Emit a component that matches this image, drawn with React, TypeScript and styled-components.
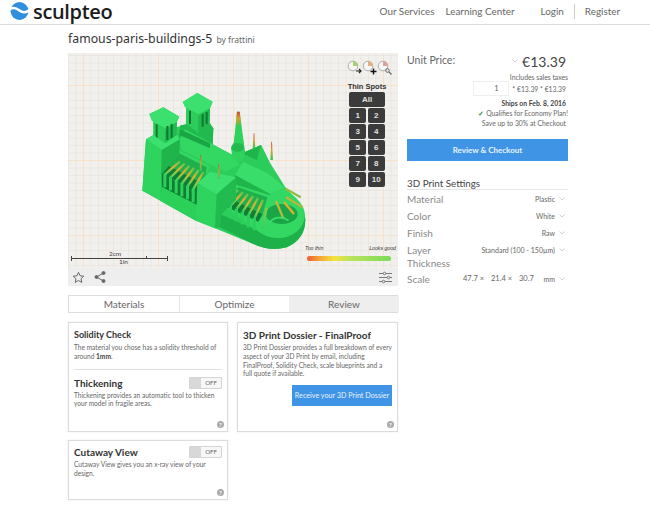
import React from "react";
import styled, { createGlobalStyle } from "styled-components";

const Global = createGlobalStyle`
  html, body { margin: 0; padding: 0; background: #fff; }
  body { font-family: Lato, "Noto Sans", sans-serif; color: #555; width: 650px; height: 508px; overflow: hidden; }
  * { box-sizing: border-box; }
`;

const Header = styled.header`
  height: 25px;
  border-bottom: 1px solid #dcdcdc;
  display: flex;
  align-items: center;
  padding: 0 30px 2px 10px;
`;
const Brand = styled.div`
  display: flex;
  align-items: center;
  gap: 4px;
  font-family: "Open Sans", sans-serif;
  font-weight: 600;
  font-size: 20px;
  letter-spacing: -0.35px;
  color: #1c1c1c;
  line-height: 23px;
`;
const Nav = styled.nav`
  margin-left: auto;
  display: flex;
  align-items: center;
  font-size: 9.9px;
  color: #666;
`;
const NavLink = styled.span<{ $ml: number }>`
  margin-left: ${(p) => p.$ml}px;
`;
const NavDivider = styled.span`
  width: 1px;
  height: 15px;
  background: #ccc;
  margin: 0 10px;
`;
const Main = styled.main`
  padding: 6px 0 0 68px;
  width: 510px;
`;
const Title = styled.h1`
  margin: 0 0 6px;
  height: 16px;
  font-family: "Noto Sans", sans-serif;
  font-weight: 400;
  font-size: 12.3px;
  line-height: 16px;
  color: #333;
`;
const By = styled.small`
  font-size: 8.5px;
  line-height: 1;
  color: #666;
  margin-left: 4px;
`;
const Columns = styled.div`
  display: grid;
  grid-template-columns: 330px 161px;
  column-gap: 9px;
`;
const Left = styled.div`
  display: flex;
  flex-direction: column;
`;
const Canvas = styled.div`
  position: relative;
  height: 215px;
  background-color: #f2f0ed;
  background-image:
    linear-gradient(90deg, #f7e1ca 1px, transparent 1px),
    linear-gradient(0deg, #f7e1ca 1px, transparent 1px),
    linear-gradient(90deg, #eae7e2 1px, transparent 1px),
    linear-gradient(0deg, #eae7e2 1px, transparent 1px);
  background-size: 75px 75px, 75px 75px, 7.5px 7.5px, 7.5px 7.5px;
  background-position: 15px 0, 0 33px, 0 0, 0 3px;
`;
const ViewBar = styled.div`
  height: 18px;
  background: #eeeeee;
  display: flex;
  align-items: center;
  padding: 0 6px 0 4px;
  gap: 9px;
`;
const BarEnd = styled.span`
  margin-left: auto;
  display: flex;
`;
const ModelSvg = styled.svg`
  position: absolute;
  left: 42px;
  top: 37px;
  width: 220px;
  height: 160px;
`;
const Tools = styled.div`
  position: absolute;
  left: 279px;
  top: 7px;
  display: flex;
  gap: 0;
`;
const Spots = styled.div`
  position: absolute;
  left: 278px;
  top: 28px;
  width: 42px;
  display: flex;
  flex-direction: column;
  align-items: center;
`;
const SpotsTitle = styled.div`
  font-family: "Liberation Sans", sans-serif;
  font-weight: 700;
  font-size: 7.5px;
  line-height: 11px;
  color: #333;
  white-space: nowrap;
`;
const SpotGrid = styled.div`
  display: grid;
  grid-template-columns: 17px 17px;
  grid-auto-rows: 15px;
  gap: 1px 1.5px;
`;
const Spot = styled.div<{ $wide?: boolean }>`
  grid-column: ${(p) => (p.$wide ? "1 / span 2" : "auto")};
  background: #3b3b3b;
  border-radius: 2px;
  color: #e0e0e0;
  font-family: "Liberation Sans", sans-serif;
  font-weight: 700;
  font-size: 8px;
  display: flex;
  align-items: center;
  justify-content: center;
`;
const ScaleBar = styled.div`
  position: absolute;
  left: 3px;
  top: 199px;
  width: 97px;
  height: 12px;
`;
const ScaleLine = styled.div`
  position: absolute;
  left: 0;
  right: 0;
  top: 4px;
  height: 5px;
  border-left: 1px solid #444;
  border-right: 1px solid #444;
  background: linear-gradient(#444, #444) center/100% 1px no-repeat;
`;
const ScaleTick = styled.div`
  position: absolute;
  left: 75px;
  top: 4px;
  width: 1px;
  height: 3px;
  background: #444;
`;
const ScaleLabel = styled.span<{ $l: number; $t: number }>`
  position: absolute;
  left: ${(p) => p.$l}px;
  top: ${(p) => p.$t}px;
  font-size: 6.5px;
  line-height: 7px;
  color: #444;
`;
const Legend = styled.div`
  position: absolute;
  left: 237px;
  top: 192px;
  width: 91px;
`;
const LegendLabels = styled.div`
  display: flex;
  justify-content: space-between;
  font-family: "Liberation Sans", sans-serif;
  font-style: italic;
  font-size: 5.2px;
  line-height: 7px;
  color: #333;
`;
const LegendBar = styled.div`
  margin: 4px 5px 0 2px;
  height: 5px;
  border-radius: 2.5px;
  background: linear-gradient(90deg, #ee5a35 0%, #f4a236 14%, #f6e23e 32%, #b8e35a 52%, #7bdc5a 100%);
`;
const Tabs = styled.div`
  margin-top: 9px;
  height: 18px;
  display: grid;
  grid-template-columns: 110px 110px 110px;
  border: 1px solid #dddddd;
`;
const Tab = styled.div<{ $active?: boolean }>`
  display: flex;
  align-items: center;
  justify-content: center;
  font-size: 10px;
  color: #666;
  background: ${(p) => (p.$active ? "#eeeeee" : "#fff")};
  border-left: ${(p) => (p.$active ? "none" : "1px solid #e4e4e4")};
  &:first-child { border-left: none; }
`;
const Cards = styled.div`
  margin-top: 9px;
  display: grid;
  grid-template-columns: 160px 161px;
  grid-template-rows: 110px 60px;
  gap: 8px 9px;
`;
const Card = styled.section`
  position: relative;
  border: 1px solid #dcdcdc;
  box-shadow: 0 0 2px rgba(0, 0, 0, 0.08);
  padding: 6px 5px;
`;
const CardHead = styled.div`
  display: flex;
  align-items: center;
  justify-content: space-between;
  margin-top: -1px;
`;
const CardTitle = styled.h3<{ $size?: number }>`
  margin: 0;
  font-weight: 700;
  font-size: ${(p) => p.$size ?? 9}px;
  line-height: 12px;
  color: #333;
`;
const CardText = styled.p`
  margin: 2px 0 0;
  font-size: 6.6px;
  line-height: 8.8px;
  color: #666;
  b { color: #444; }
`;
const Rule = styled.hr`
  border: 0;
  border-top: 1px solid #e2e2e2;
  margin: 8px 0 8px;
`;
const Toggle = styled.div`
  width: 33px;
  height: 12px;
  border: 1px solid #d4d4d4;
  border-radius: 1px;
  display: flex;
  font-size: 6px;
  color: #666;
  background: #f7f7f7;
`;
const Knob = styled.span`
  width: 11px;
  background: #d8d8d8;
`;
const ToggleText = styled.span`
  flex: 1;
  text-align: center;
  line-height: 10px;
`;
const Help = styled.span`
  position: absolute;
  right: 3px;
  bottom: 3px;
  width: 7px;
  height: 7px;
  border-radius: 50%;
  background: #a9a9a9;
  color: #fff;
  font-size: 6px;
  line-height: 7px;
  text-align: center;
  font-weight: 700;
`;
const DossierRow = styled.div`
  display: flex;
  justify-content: flex-end;
  margin-top: 7px;
`;
const DossierButton = styled.div`
  width: 100px;
  height: 21px;
  background: #3f94e6;
  color: #e9f3fd;
  font-size: 7.2px;
  display: flex;
  align-items: center;
  justify-content: center;
`;
const Right = styled.aside`
  display: flex;
  flex-direction: column;
`;
const PriceRow = styled.div`
  display: flex;
  align-items: center;
  height: 19px;
  padding-bottom: 3px;
`;
const PriceLabel = styled.span`
  font-size: 10.5px;
  color: #666;
  margin-top: -2px;
`;
const Price = styled.span`
  margin-left: auto;
  display: flex;
  align-items: center;
  gap: 4px;
  font-size: 14px;
  color: #444;
  padding-right: 2px;
`;
const Small = styled.div<{ $bold?: boolean; $pr?: number }>`
  text-align: right;
  font-size: 6.8px;
  line-height: 10px;
  padding-right: ${(p) => p.$pr ?? 0}px;
  color: ${(p) => (p.$bold ? "#444" : "#666")};
  font-weight: ${(p) => (p.$bold ? 700 : 400)};
  white-space: nowrap;
`;
const QtyRow = styled.div`
  display: flex;
  justify-content: flex-end;
  align-items: center;
  gap: 3px;
  height: 15px;
  padding-right: 2px;
  margin: -1px 0 2px;
  font-size: 6.8px;
  color: #666;
`;
const Qty = styled.span`
  width: 36px;
  height: 15px;
  border: 1px solid #efefef;
  text-align: center;
  font-size: 7.5px;
  line-height: 13px;
  padding-left: 10px;
`;
const Check = styled.span`
  color: #2f8a3c;
  font-weight: 700;
`;
const Checkout = styled.div`
  margin-top: 11px;
  height: 22px;
  background: #3f94e6;
  color: #e9f3fd;
  font-size: 8px;
  font-weight: 700;
  display: flex;
  align-items: center;
  justify-content: center;
`;
const SettingsTitle = styled.h2`
  margin: 17px 0 0;
  font-weight: 400;
  font-size: 9.8px;
  line-height: 11px;
  color: #444;
  border-bottom: 1px solid #e6e6e6;
`;
const Setting = styled.div<{ $h?: number }>`
  display: flex;
  align-items: flex-start;
  height: ${(p) => p.$h ?? 17}px;
  padding-top: 3px;
`;
const SettingLabel = styled.span<{ $w?: number }>`
  width: ${(p) => p.$w ?? 50}px;
  font-size: 10px;
  line-height: 13px;
  color: #8a8a8a;
`;
const SettingValue = styled.span`
  margin-left: auto;
  font-size: 7px;
  line-height: 12px;
  color: #666;
  white-space: nowrap;
`;
const Chevron = styled.span`
  width: 13px;
  display: flex;
  justify-content: center;
  padding-top: 4px;
  flex: none;
`;
const Dim = styled.span<{ $w: number }>`
  width: ${(p) => p.$w}px;
  font-size: 7.5px;
  line-height: 12px;
  color: #666;
  white-space: nowrap;
`;

const Chev = () => (
  <svg width="6" height="4" viewBox="0 0 6 4"><path d="M.5.5 3 3 5.5.5" fill="none" stroke="#d0d0d0" /></svg>
);

const Logo = () => (
  <svg width="19" height="18" viewBox="0 0 19 18">
    <circle cx="9.5" cy="9" r="9" fill="#2f8fde" />
    <path d="M-.5 7.5C3.5 4.5 7 6.5 9.5 8.5S15 11.5 19.5 8" fill="none" stroke="#fff" strokeWidth="2.6" />
  </svg>
);

const Tool = ({ c, d }: { c: string; d: React.ReactNode }) => (
  <svg width="15" height="15" viewBox="0 0 15 15">
    <circle cx="6" cy="6" r="4.8" fill="#f6f6f6" stroke="#9a9a9a" strokeWidth=".8" />
    <path d="M6 6V1.2A4.8 4.8 0 0 1 10.8 6z" fill={c} />
    {d}
  </svg>
);

const Tip = ({ x, y, h, w = 5 }: { x: number; y: number; h: number; w?: number }) => (
  <polygon points={`${x - 1},${y} ${x + 1},${y} ${x + w},${y + h} ${x - w},${y + h}`} fill="url(#tip)" />
);

const ribs = [0, 1, 2, 3, 4, 5];

const Model = () => (
  <ModelSvg viewBox="0 0 660 480">
    <defs>
      <linearGradient id="tip" x1="0" y1="0" x2="0" y2="1">
        <stop offset="0" stopColor="#c8452d" />
        <stop offset=".45" stopColor="#d9a02c" />
        <stop offset="1" stopColor="#35c95c" />
      </linearGradient>
      <linearGradient id="rib" gradientUnits="objectBoundingBox" x1="0" y1="1" x2="1" y2="0">
        <stop offset="0" stopColor="#35d161" />
        <stop offset=".3" stopColor="#8cc948" />
        <stop offset=".6" stopColor="#e3ae30" />
        <stop offset="1" stopColor="#52c955" />
      </linearGradient>
    </defs>
    {/* solid silhouette */}
    <path d="M108 148 130 135 130 95 118 72 160 52 208 80 200 97 200 112 228 102 228 50 218 36 262 9 308 35 300 55 298 105 310 115 308 165 365 195 372 155 381 65 389 65 402 165 405 185 453 165 478 215 525 290 575 350 586 385 Q586 448 530 472 Q480 486 430 462 L315 415 258 392 97 302Z" fill="#2ccd5b" />

    {/* back tower */}
    <polygon points="212,105 300,100 310,115 308,165 265,180 205,150" fill="#22b94e" />
    <polygon points="228,50 265,78 300,55 298,105 265,130 230,102" fill="#2ccd5b" />
    <polygon points="265,78 300,55 298,105 265,130" fill="#22b94e" />
    <polygon points="218,36 262,9 308,35 300,55 265,72 225,52" fill="#3ce06e" />
    <path d="M240 62v40M278 72v38M290 66v36" stroke="#0e7a30" strokeWidth="6" />

    {/* nave roof */}
    <polygon points="208,150 225,118 370,196 388,225 345,245 215,180" fill="#33d862" />
    <polygon points="210,118 300,160 300,175 208,135" fill="#1ba646" />
    <polygon points="205,180 300,228 290,250 205,205" fill="#33d862" />

    {/* gable + right spires */}
    <polygon points="398,190 453,165 478,215 470,250 410,225" fill="#2bcc5a" />
    <polygon points="398,190 453,165 440,210" fill="#1fb54a" />
    <Tip x={432} y={130} h={45} w={4} />
    <Tip x={485} y={155} h={55} w={4} />

    {/* apse roof */}
    <polygon points="375,255 400,215 470,248 525,292 480,312" fill="#38de69" />
    <polygon points="375,255 480,312 476,332 375,282" fill="#1fb54a" />

    {/* main spire */}
    <polygon points="380,95 391,95 402,165 405,200 392,218 368,205 363,175 372,155" fill="#2ed25d" />
    <polygon points="381,65 389,65 394,110 377,110" fill="url(#tip)" />
    <ellipse cx="383" cy="172" rx="19" ry="13" fill="#22b94e" />

    {/* apse disc */}
    <path d="M330 372 L330 412 L430 462 Q480 486 530 472 Q586 448 586 390 L584 370 Q575 428 520 442 Q470 448 440 420Z" fill="#1db149" />
    <path d="M335 345 L380 285 L480 315 L520 295 Q585 335 585 378 Q578 430 520 443 Q470 448 440 420Z" fill="#33d862" />

    {/* apse choir: gaps, pillars and ribs */}
    <polygon points="336,345 355,322 458,372 445,395" fill="#0f7f35" />
    <polygon points="355,322 385,292 472,322 458,372" fill="#1fb04b" />
    {ribs.map((i) => (
      <g key={i}>
        <rect x={338 + i * 18} y={338 + i * 9} width="10" height="38" fill="#2ccf5b" />
        <line x1={344 + i * 18} y1={338 + i * 9} x2={384 + i * 15} y2={300 + i * 6} stroke="url(#rib)" strokeWidth="7" />
      </g>
    ))}
    <ellipse cx="515" cy="372" rx="48" ry="30" fill="#1aa547" />
    <path d="M458 415l12-62M520 385l-22-52M552 372l-30-36M578 352l-50-30M572 322l-45-26" stroke="url(#rib)" strokeWidth="7" fill="none" />
    <path d="M478 398c14-18 40-20 58-6" stroke="#3adf6a" strokeWidth="5" fill="none" />

    {/* left aisle */}
    <polygon points="155,248 172,225 282,282 262,312" fill="#0f7f35" />
    <polygon points="172,225 208,190 290,232 282,282" fill="#1fb04b" />
    <polygon points="155,248 156,292 262,348 262,312" fill="#0f7f35" />
    {ribs.map((i) => (
      <g key={i}>
        <rect x={160 + i * 17} y={252 + i * 9} width="9" height="40" fill="#2ccf5b" />
        <line x1={164 + i * 17} y1={254 + i * 9} x2={210 + i * 14} y2={214 + i * 6.5} stroke="url(#rib)" strokeWidth="7" />
      </g>
    ))}
    <polygon points="150,288 262,345 260,394 150,332" fill="#2ad058" />

    {/* left tower */}
    <polygon points="130,95 165,120 200,95 200,135 165,165 130,140" fill="#2ccd5b" />
    <polygon points="165,120 200,95 200,135 165,165" fill="#22b94e" />
    <polygon points="118,72 160,52 208,80 200,97 165,114 125,92" fill="#3ce06e" />
    <path d="M140 103v42M172 108v42M185 102v42" stroke="#0e7a30" strokeWidth="6" />
    <polygon points="108,148 130,135 165,160 200,135 210,148 155,180" fill="#3ce06e" />
    <polygon points="108,148 155,180 152,330 97,302" fill="#2fd45e" />
    <polygon points="155,180 210,148 208,190 156,252 152,330" fill="#1fb54a" />

    {/* transept */}
    <polygon points="262,280 320,312 315,415 258,392" fill="#2fd45e" />
    <polygon points="320,312 378,262 378,330 335,372 330,412 315,415" fill="#22bb4f" />
    <polygon points="262,280 300,245 378,262 320,312" fill="#3ce06e" />
    <Tip x={272} y={195} h={48} w={3} />
    <Tip x={326} y={222} h={45} w={3} />
  </ModelSvg>
);

const spots = ["1", "2", "3", "4", "5", "6", "7", "8", "9", "10"];

export default function App() {
  return (
    <>
      <Global />
      <Header>
        <Brand>
          <Logo />
          sculpteo
        </Brand>
        <Nav>
          <NavLink $ml={0}>Our Services</NavLink>
          <NavLink $ml={11}>Learning Center</NavLink>
          <NavLink $ml={26}>Login</NavLink>
          <NavDivider />
          <span>Register</span>
        </Nav>
      </Header>
      <Main>
        <Title>
          famous-paris-buildings-5<By>by frattini</By>
        </Title>
        <Columns>
          <Left>
            <Canvas>
              <Model />
              <Tools>
                <Tool c="#a8d070" d={<path d="M9 11h5M12 9l2 2-2 2" stroke="#222" strokeWidth="1.2" fill="none" />} />
                <Tool c="#e0b080" d={<path d="M8.5 11.5h6M11.5 8.5v6" stroke="#111" strokeWidth="1.4" />} />
                <Tool c="#e0a0a0" d={<g stroke="#666" fill="none"><circle cx="10.5" cy="10.5" r="1.8" /><path d="M12 12l2.5 2.5" strokeWidth="1.2" /></g>} />
              </Tools>
              <Spots>
                <SpotsTitle>Thin Spots</SpotsTitle>
                <SpotGrid>
                  <Spot $wide>All</Spot>
                  {spots.map((s) => (
                    <Spot key={s}>{s}</Spot>
                  ))}
                </SpotGrid>
              </Spots>
              <ScaleBar>
                <ScaleLabel $l={38} $t={-2}>2cm</ScaleLabel>
                <ScaleLine />
                <ScaleTick />
                <ScaleLabel $l={48} $t={6}>1in</ScaleLabel>
              </ScaleBar>
              <Legend>
                <LegendLabels>
                  <span>Too thin</span>
                  <span>Looks good</span>
                </LegendLabels>
                <LegendBar />
              </Legend>
            </Canvas>
            <ViewBar>
              <svg width="13" height="13" viewBox="0 0 24 24" fill="none" stroke="#666" strokeWidth="1.8" strokeLinejoin="round">
                <path d="M12 2.5l2.9 6.3 6.9.8-5.1 4.6 1.4 6.8-6.1-3.4-6.1 3.4 1.4-6.8-5.1-4.6 6.9-.8z" />
              </svg>
              <svg width="12" height="12" viewBox="0 0 24 24" fill="#666" stroke="#666" strokeWidth="2">
                <circle cx="19" cy="4" r="3" />
                <circle cx="5" cy="12" r="3" />
                <circle cx="19" cy="20" r="3" />
                <path d="M19 4L5 12l14 8" fill="none" />
              </svg>
              <BarEnd>
                <svg width="13" height="13" viewBox="0 0 13 13" fill="none" stroke="#777">
                  <path d="M0 2.5h4M7 2.5h6M0 6.5h8M11 6.5h2M0 10.5h3M6 10.5h7" />
                  <circle cx="5.5" cy="2.5" r="1.3" />
                  <circle cx="9.5" cy="6.5" r="1.3" />
                  <circle cx="4.5" cy="10.5" r="1.3" />
                </svg>
              </BarEnd>
            </ViewBar>
            <Tabs>
              <Tab>Materials</Tab>
              <Tab>Optimize</Tab>
              <Tab $active>Review</Tab>
            </Tabs>
            <Cards>
              <Card>
                <CardTitle>Solidity Check</CardTitle>
                <CardText>
                  The material you chose has a solidity threshold of around <b>1mm</b>.
                </CardText>
                <Rule />
                <CardHead>
                  <CardTitle $size={10}>Thickening</CardTitle>
                  <Toggle><Knob /><ToggleText>OFF</ToggleText></Toggle>
                </CardHead>
                <CardText>Thickening provides an automatic tool to thicken your model in fragile areas.</CardText>
                <Help>?</Help>
              </Card>
              <Card>
                <CardTitle $size={10}>3D Print Dossier - FinalProof</CardTitle>
                <CardText>
                  3D Print Dossier provides a full breakdown of every aspect of your 3D Print by email, including FinalProof, Solidity Check, scale blueprints and a full quote if available.
                </CardText>
                <DossierRow>
                  <DossierButton>Receive your 3D Print Dossier</DossierButton>
                </DossierRow>
                <Help>?</Help>
              </Card>
              <Card>
                <CardHead>
                  <CardTitle $size={10}>Cutaway View</CardTitle>
                  <Toggle><Knob /><ToggleText>OFF</ToggleText></Toggle>
                </CardHead>
                <CardText>Cutaway View gives you an x-ray view of your design.</CardText>
                <Help>?</Help>
              </Card>
            </Cards>
          </Left>
          <Right>
            <PriceRow>
              <PriceLabel>Unit Price:</PriceLabel>
              <Price><Chev />€13.39</Price>
            </PriceRow>
            <Small>Includes sales taxes</Small>
            <QtyRow>
              <Qty>1</Qty>
              <span>* €13.39 * €13.39</span>
            </QtyRow>
            <Small $bold $pr={2}>Ships on Feb. 8, 2016</Small>
            <Small><Check>✓</Check> Qualifies for Economy Plan!</Small>
            <Small $pr={2}>Save up to 30% at Checkout</Small>
            <Checkout>Review &amp; Checkout</Checkout>
            <SettingsTitle>3D Print Settings</SettingsTitle>
            <Setting>
              <SettingLabel>Material</SettingLabel>
              <SettingValue>Plastic</SettingValue>
              <Chevron><Chev /></Chevron>
            </Setting>
            <Setting>
              <SettingLabel>Color</SettingLabel>
              <SettingValue>White</SettingValue>
              <Chevron><Chev /></Chevron>
            </Setting>
            <Setting>
              <SettingLabel>Finish</SettingLabel>
              <SettingValue>Raw</SettingValue>
              <Chevron><Chev /></Chevron>
            </Setting>
            <Setting $h={29}>
              <SettingLabel>Layer Thickness</SettingLabel>
              <SettingValue>Standard (100 - 150µm)</SettingValue>
              <Chevron><Chev /></Chevron>
            </Setting>
            <Setting>
              <SettingLabel $w={56}>Scale</SettingLabel>
              <Dim $w={28}>47.7 ×</Dim>
              <Dim $w={28}>21.4 ×</Dim>
              <Dim $w={24}>30.7</Dim>
              <SettingValue>mm</SettingValue>
              <Chevron><Chev /></Chevron>
            </Setting>
          </Right>
        </Columns>
      </Main>
    </>
  );
}
